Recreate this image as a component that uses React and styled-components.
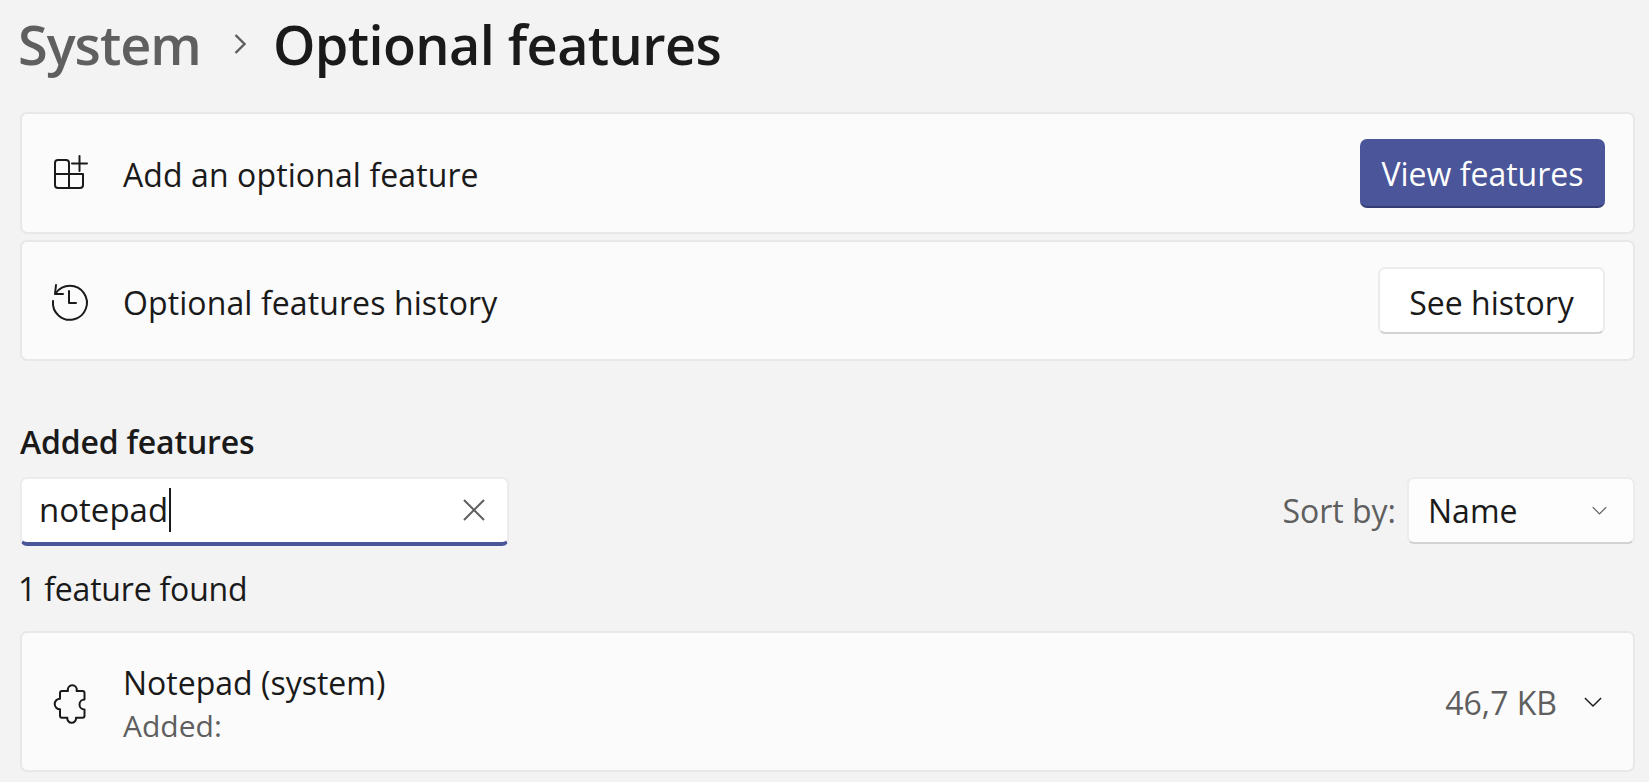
import React from "react";
import styled, { createGlobalStyle } from "styled-components";

const GlobalStyle = createGlobalStyle`
  html, body {
    margin: 0;
    height: 100%;
    background: #f3f3f3;
    overflow: hidden;
  }
  body {
    font-family: "Open Sans", "Noto Sans", sans-serif;
    color: #1a1a1a;
  }
`;

const Page = styled.div`
  padding: 0 14px 0 20px;
`;

const Breadcrumb = styled.header`
  height: 112px;
  display: flex;
  align-items: center;
  gap: 30px;
  margin-left: -2px;
  padding-bottom: 24px;
  box-sizing: border-box;
  font-size: 54px;
  font-weight: 600;
  letter-spacing: -0.6px;
`;

const Parent = styled.span`
  color: #5f5f5f;
  letter-spacing: -1px;
`;

const BreadChevron = styled.svg`
  width: 12px;
  height: 22px;
  margin: 0 -3px 0 3px;
  fill: none;
  stroke: #5f5f5f;
  stroke-width: 2.4;
`;

const Card = styled.section`
  box-sizing: border-box;
  height: ${(p) => p.$height}px;
  margin-bottom: ${(p) => p.$gap || 0}px;
  padding: 0 ${(p) => p.$right || 28}px 0 28px;
  display: flex;
  align-items: center;
  background: #fbfbfb;
  border: 2px solid #e8e8e8;
  border-radius: 7px;
`;

const IconSlot = styled.svg`
  width: 36px;
  height: 36px;
  flex: none;
  margin-right: 37px;
  overflow: visible;
  fill: none;
  stroke: #1a1a1a;
  stroke-width: 2;
  stroke-linecap: round;
  stroke-linejoin: round;
`;

const CardLabel = styled.div`
  flex: 1;
  padding-top: 3px;
  font-size: 32px;
  letter-spacing: 0.1px;
`;

const Button = styled.button`
  box-sizing: border-box;
  width: ${(p) => p.$width}px;
  height: ${(p) => p.$height}px;
  font: inherit;
  font-size: 32px;
  border-radius: 7px;
  padding: 3px 0 0;
  color: ${(p) => (p.$primary ? "#ffffff" : "#1a1a1a")};
  background: ${(p) => (p.$primary ? "#4a5699" : "#ffffff")};
  border: ${(p) => (p.$primary ? "0" : "2px solid #ececec")};
  border-bottom: ${(p) => (p.$primary ? "2px solid #343e74" : "2px solid #d2d2d2")};
`;

const SectionTitle = styled.h2`
  margin: 0;
  height: 116px;
  box-sizing: border-box;
  display: flex;
  align-items: flex-end;
  padding-bottom: 14px;
  font-size: 32px;
  font-weight: 600;
  letter-spacing: -0.2px;
`;

const Toolbar = styled.div`
  display: flex;
  align-items: flex-start;
  justify-content: space-between;
`;

const SearchBox = styled.div`
  box-sizing: border-box;
  width: 489px;
  height: 69px;
  padding: 0 22px 2px 17px;
  display: flex;
  align-items: center;
  background: #ffffff;
  border: 2px solid #ececec;
  border-bottom: 4px solid #4a5699;
  border-radius: 7px;
`;

const SearchText = styled.span`
  font-size: 33px;
`;

const Caret = styled.span`
  width: 2px;
  height: 44px;
  background: #1a1a1a;
  margin-left: 1px;
`;

const ClearIcon = styled.svg`
  width: 22px;
  height: 22px;
  margin-left: auto;
  fill: none;
  stroke: #5f5f5f;
  stroke-width: 2;
`;

const SortGroup = styled.div`
  display: flex;
  align-items: center;
  gap: 11px;
`;

const SortLabel = styled.span`
  font-size: 32px;
  color: #5f5f5f;
`;

const Select = styled.div`
  box-sizing: border-box;
  width: 228px;
  height: 67px;
  padding: 0 26px 0 19px;
  display: flex;
  align-items: center;
  justify-content: space-between;
  font-size: 32px;
  background: #fdfdfd;
  border: 2px solid #ececec;
  border-bottom: 2px solid #d2d2d2;
  border-radius: 7px;
`;

const Chevron = styled.svg`
  width: ${(p) => p.$size}px;
  height: ${(p) => p.$size}px;
  flex: none;
  fill: none;
  stroke: ${(p) => p.$color};
  stroke-width: 1.6;
`;

const ResultCount = styled.p`
  margin: 0;
  height: 85px;
  box-sizing: border-box;
  padding-top: 21px;
  font-size: 32px;
  letter-spacing: -0.2px;
  margin-left: -2px;
`;

const FeatureText = styled.div`
  flex: 1;
  padding-top: 4px;
  display: flex;
  flex-direction: column;
`;

const FeatureName = styled.span`
  font-size: 32px;
  line-height: 44px;
`;

const FeatureMeta = styled.span`
  font-size: 30px;
  line-height: 42px;
  color: #5f5f5f;
`;

const FeatureSize = styled.span`
  padding-top: 2px;
  font-size: 32px;
  color: #5f5f5f;
  margin-right: 27px;
`;

const AddIcon = () => (
  <IconSlot viewBox="0 0 36 36">
    <path d="M19 19V8a3 3 0 0 0-3-3H8a3 3 0 0 0-3 3v22a3 3 0 0 0 3 3h22a3 3 0 0 0 3-3V19H5M19 19v14" />
    <path d="M22 8.5h15M29.5 1v15" />
  </IconSlot>
);

const HistoryIcon = () => (
  <IconSlot viewBox="0 0 36 36">
    <path d="M6 10A17 17 0 1 1 3 18" />
    <path d="M6 2l-1 9h8" />
    <path d="M19 8v12h7" />
  </IconSlot>
);

const PuzzleIcon = () => (
  <IconSlot viewBox="0 0 36 36">
    <path d="M18 7a4.5 4.5 0 1 1 8.6 0h5.9a2 2 0 0 1 2 2v6.5a5 5 0 0 0 0 10v6.2a2 2 0 0 1-2 2H26a4.4 4.4 0 1 1-8.7 0H12a2 2 0 0 1-2-2v-6.4a5.3 5.3 0 0 1 0-10.6V9a2 2 0 0 1 2-2z" />
  </IconSlot>
);

const ChevronDown = ({ size, color }) => (
  <Chevron $size={size} $color={color} viewBox="0 0 20 20">
    <path d="M1 5.5l9 9 9-9" />
  </Chevron>
);

export default function App() {
  return (
    <Page>
      <GlobalStyle />
      <Breadcrumb>
        <Parent>System</Parent>
        <BreadChevron viewBox="0 0 12 22">
          <path d="M1.5 2l9 9-9 9" />
        </BreadChevron>
        <span>Optional features</span>
      </Breadcrumb>

      <Card $height={122} $gap={6}>
        <AddIcon />
        <CardLabel>Add an optional feature</CardLabel>
        <Button $primary $width={245} $height={69}>View features</Button>
      </Card>
      <Card $height={121}>
        <HistoryIcon />
        <CardLabel>Optional features history</CardLabel>
        <Button $width={227} $height={67}>See history</Button>
      </Card>

      <SectionTitle>Added features</SectionTitle>

      <Toolbar>
        <SearchBox>
          <SearchText>notepad</SearchText>
          <Caret />
          <ClearIcon viewBox="0 0 22 22">
            <path d="M1 1l20 20M21 1L1 21" />
          </ClearIcon>
        </SearchBox>
        <SortGroup>
          <SortLabel>Sort by:</SortLabel>
          <Select>
            <span>Name</span>
            <ChevronDown size={15} color="#5f5f5f" />
          </Select>
        </SortGroup>
      </Toolbar>

      <ResultCount>1 feature found</ResultCount>

      <Card $height={141} $right={31}>
        <PuzzleIcon />
        <FeatureText>
          <FeatureName>Notepad (system)</FeatureName>
          <FeatureMeta>Added:</FeatureMeta>
        </FeatureText>
        <FeatureSize>46,7 KB</FeatureSize>
        <ChevronDown size={18} color="#1a1a1a" />
      </Card>
    </Page>
  );
}
